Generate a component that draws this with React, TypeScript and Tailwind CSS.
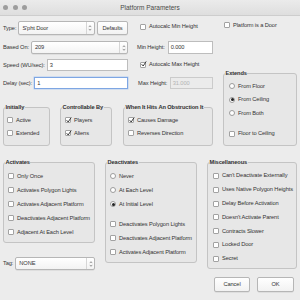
import type { ReactNode } from "react"

const Check = ({ checked }: { checked?: boolean }) => (
    <span className="relative w-[6px] h-[6px] shrink-0 rounded-[1px] border border-[#a2a2a2] bg-white">
        {checked && (
            <svg viewBox="0 0 6 6" className="absolute left-[0px] top-[-1.5px] w-[6px] h-[6px] overflow-visible">
                <path d="M0.6 3.2 L2.2 5 L5.2 0.4" stroke="#2a2a2a" strokeWidth="0.9" fill="none" />
            </svg>
        )}
    </span>
)

const Radio = ({ on }: { on?: boolean }) => (
    <span className="w-[6px] h-[6px] shrink-0 rounded-full border border-[#9c9c9c] bg-white flex items-center justify-center">
        {on && <span className="w-[3px] h-[3px] rounded-full bg-[#222]" />}
    </span>
)

const Opt = ({ label, checked, radio, on, h = "h-[14px]" }: {
    label: string, checked?: boolean, radio?: boolean, on?: boolean, h?: string
}) => (
    <div className={`flex items-center gap-[3px] ${h}`}>
        {radio ? <Radio on={on} /> : <Check checked={checked} />}
        <span className="whitespace-nowrap">{label}</span>
    </div>
)

const Group = ({ title, className, inner, children }: {
    title: string, className: string, inner: string, children: ReactNode
}) => (
    <fieldset className={`border border-[#c4c4c4] rounded-[3px] bg-[#e7e7e7] ${className}`}>
        <legend className="ml-[1px] px-[0.5px] font-bold text-[#303030] whitespace-nowrap">{title}</legend>
        <div className={inner}>{children}</div>
    </fieldset>
)

const Arrows = () => (
    <span className="w-[8px] h-full flex items-center justify-center border-l border-[#d6d6d6]">
        <svg viewBox="0 0 4 8" className="w-[4px] h-[8px]">
            <path d="M0.8 3.1 L2 1.7 L3.2 3.1" stroke="#555" strokeWidth="0.6" fill="none" />
            <path d="M0.8 4.9 L2 6.3 L3.2 4.9" stroke="#555" strokeWidth="0.6" fill="none" />
        </svg>
    </span>
)

const Select = ({ value, className }: { value: string, className: string }) => (
    <div className={`flex items-center rounded-[2px] border border-[#b6b6b6] bg-gradient-to-b from-white to-[#f3f3f3] shadow-[0_0.5px_0.5px_rgba(0,0,0,0.12)] ${className}`}>
        <span className="flex-1 pl-[3px] whitespace-nowrap">{value}</span>
        <Arrows />
    </div>
)

const Field = ({ value, className }: { value: string, className: string }) => (
    <div className={`flex items-center px-[2px] border ${className}`}>{value}</div>
)

const Button = ({ label, className }: { label: string, className: string }) => (
    <div className={`flex items-center justify-center rounded-[2px] border border-[#b6b6b6] bg-gradient-to-b from-white to-[#f2f2f2] shadow-[0_0.5px_0.5px_rgba(0,0,0,0.12)] ${className}`}>
        {label}
    </div>
)

export default function App() {
    return (
        <div className="w-[300px] h-[300px] overflow-hidden flex flex-col bg-[#ececec] text-[5.7px] tracking-[-0.1px] leading-[7px] text-[#333] font-['Liberation_Sans',Arial,sans-serif]">
            <div className="h-[16px] shrink-0 flex items-center border-b border-[#cdcdcd] bg-gradient-to-b from-[#ebebeb] to-[#dedede]">
                <div className="w-[40px] flex gap-[4.5px] pl-[3px]">
                    <span className="w-[5px] h-[5px] rounded-full bg-[#9d9d9d]" />
                    <span className="w-[5px] h-[5px] rounded-full bg-[#9d9d9d]" />
                    <span className="w-[5px] h-[5px] rounded-full bg-[#9d9d9d]" />
                </div>
                <div className="flex-1 text-center text-[6.5px] tracking-normal text-[#4a4a4a]">Platform Parameters</div>
                <div className="w-[40px]" />
            </div>

            <div className="flex flex-col px-[3px] pt-[5px]">
                <div className="flex">
                    <div className="w-[210px] flex flex-col">
                        <div className="flex items-center h-[14px]">
                            <div className="w-[125px] flex items-center h-full">
                                <span>Type:</span>
                                <Select value="S'pht Door" className="flex-1 ml-[2px] h-[14px]" />
                                <Button label="Defaults" className="w-[31px] ml-[2.5px] h-[14px]" />
                            </div>
                            <div className="ml-[9px] w-[76px] -mt-[3px]">
                                <div className="ml-[3px]"><Opt label="Autocalc Min Height" /></div>
                            </div>
                        </div>
                        <div className="flex items-center h-[13px] mt-[6px]">
                            <div className="w-[125px] flex items-center h-full">
                                <span>Based On:</span>
                                <Select value="209" className="flex-1 ml-[2px] h-[13px]" />
                            </div>
                            <div className="ml-[9px] w-[76px] flex items-center h-full">
                                <span>Min Height:</span>
                                <Field value="0.000" className="flex-1 ml-[3px] h-[13px] bg-white border-[#bdbdbd]" />
                            </div>
                        </div>
                        <div className="flex items-center h-[12px] mt-[5px]">
                            <div className="w-[125px] flex items-center h-full">
                                <span className="whitespace-nowrap">Speed (WU/sec):</span>
                                <Field value="3" className="flex-1 ml-[2px] h-[12px] bg-white border-[#bdbdbd]" />
                            </div>
                            <div className="ml-[9px] w-[76px] -mt-[1px]">
                                <div className="ml-[3px]"><Opt label="Autocalc Max Height" checked /></div>
                            </div>
                        </div>
                        <div className="flex items-center h-[12px] mt-[6px]">
                            <div className="w-[125px] flex items-center h-full">
                                <span className="whitespace-nowrap">Delay (sec):</span>
                                <Field value="1" className="flex-1 ml-[2px] h-[12px] bg-white border-[#7ea6e3] shadow-[0_0_0_0.5px_#b3cdf2]" />
                            </div>
                            <div className="ml-[10px] w-[75px] flex items-center h-full">
                                <span className="whitespace-nowrap">Max Height:</span>
                                <Field value="31.000" className="flex-1 ml-[2.5px] h-[12px] bg-[#ebebeb] border-[#cbcbcb] text-[#b3b3b3]" />
                            </div>
                        </div>

                        <div className="flex mt-[14.5px]">
                            <Group title="Initially" className="w-[47px] h-[42px]" inner="pl-[3px] pt-[3px]">
                                <Opt label="Active" h="h-[13px]" />
                                <Opt label="Extended" h="h-[13px]" />
                            </Group>
                            <Group title="Controllable By" className="ml-[10px] w-[52px] h-[42px]" inner="pl-[4px] pt-[3px]">
                                <Opt label="Players" checked h="h-[13px]" />
                                <Opt label="Aliens" checked h="h-[13px]" />
                            </Group>
                            <Group title="When It Hits An Obstruction It" className="ml-[11px] w-[90px] h-[42px]" inner="pl-[4px] pt-[3px]">
                                <Opt label="Causes Damage" checked h="h-[13px]" />
                                <Opt label="Reverses Direction" h="h-[13px]" />
                            </Group>
                        </div>
                    </div>

                    <div className="ml-[10px] w-[74px] flex flex-col justify-between">
                        <div className="h-[14px] flex items-center -mt-[3px] ml-[1px]">
                            <Opt label="Platform is a Door" />
                        </div>
                        <Group title="Extends" className="h-[76px]" inner="pl-[5px] pt-[3px]">
                            <Opt label="From Floor" radio h="h-[13.5px]" />
                            <Opt label="From Ceiling" radio on h="h-[13.5px]" />
                            <Opt label="From Both" radio h="h-[13.5px]" />
                            <div className="mt-[7px]"><Opt label="Floor to Ceiling" h="h-[13.5px]" /></div>
                        </Group>
                    </div>
                </div>

                <div className="flex items-start mt-[13px]">
                    <div className="w-[92px] flex flex-col">
                        <Group title="Activates" className="h-[84px]" inner="pl-[4px] pt-[3.5px]">
                            <Opt label="Only Once" />
                            <Opt label="Activates Polygon Lights" />
                            <Opt label="Activates Adjacent Platform" />
                            <Opt label="Deactivates Adjacent Platform" />
                            <Opt label="Adjacent At Each Level" />
                        </Group>
                        <div className="flex items-center h-[13px] mt-[14.5px]">
                            <span>Tag:</span>
                            <Select value="NONE" className="flex-1 ml-[2px] h-[13px]" />
                        </div>
                    </div>
                    <Group title="Deactivates" className="ml-[10px] w-[92px] h-[104px]" inner="pl-[4px] pt-[3.5px]">
                        <Opt label="Never" radio />
                        <Opt label="At Each Level" radio />
                        <Opt label="At Initial Level" radio on />
                        <div className="mt-[6px]">
                            <Opt label="Deactivates Polygon Lights" />
                            <Opt label="Deactivates Adjacent Platform" />
                            <Opt label="Activates Adjacent Platform" />
                        </div>
                    </Group>
                    <div className="ml-[10px] w-[90px] flex flex-col">
                        <Group title="Miscellaneous" className="h-[110px]" inner="pl-[5px] pt-[3.6px]">
                            <Opt label="Can't Deactivate Externally" h="h-[13.8px]" />
                            <Opt label="Uses Native Polygon Heights" h="h-[13.8px]" />
                            <Opt label="Delay Before Activation" h="h-[13.8px]" />
                            <Opt label="Doesn't Activate Parent" h="h-[13.8px]" />
                            <Opt label="Contracts Slower" h="h-[13.8px]" />
                            <Opt label="Locked Door" h="h-[13.8px]" />
                            <Opt label="Secret" h="h-[13.8px]" />
                        </Group>
                        <div className="flex mt-[8.5px]">
                            <Button label="Cancel" className="ml-[7px] w-[36px] h-[15px]" />
                            <Button label="OK" className="ml-[7px] w-[37px] h-[15px]" />
                        </div>
                    </div>
                </div>
            </div>
        </div>
    )
}
